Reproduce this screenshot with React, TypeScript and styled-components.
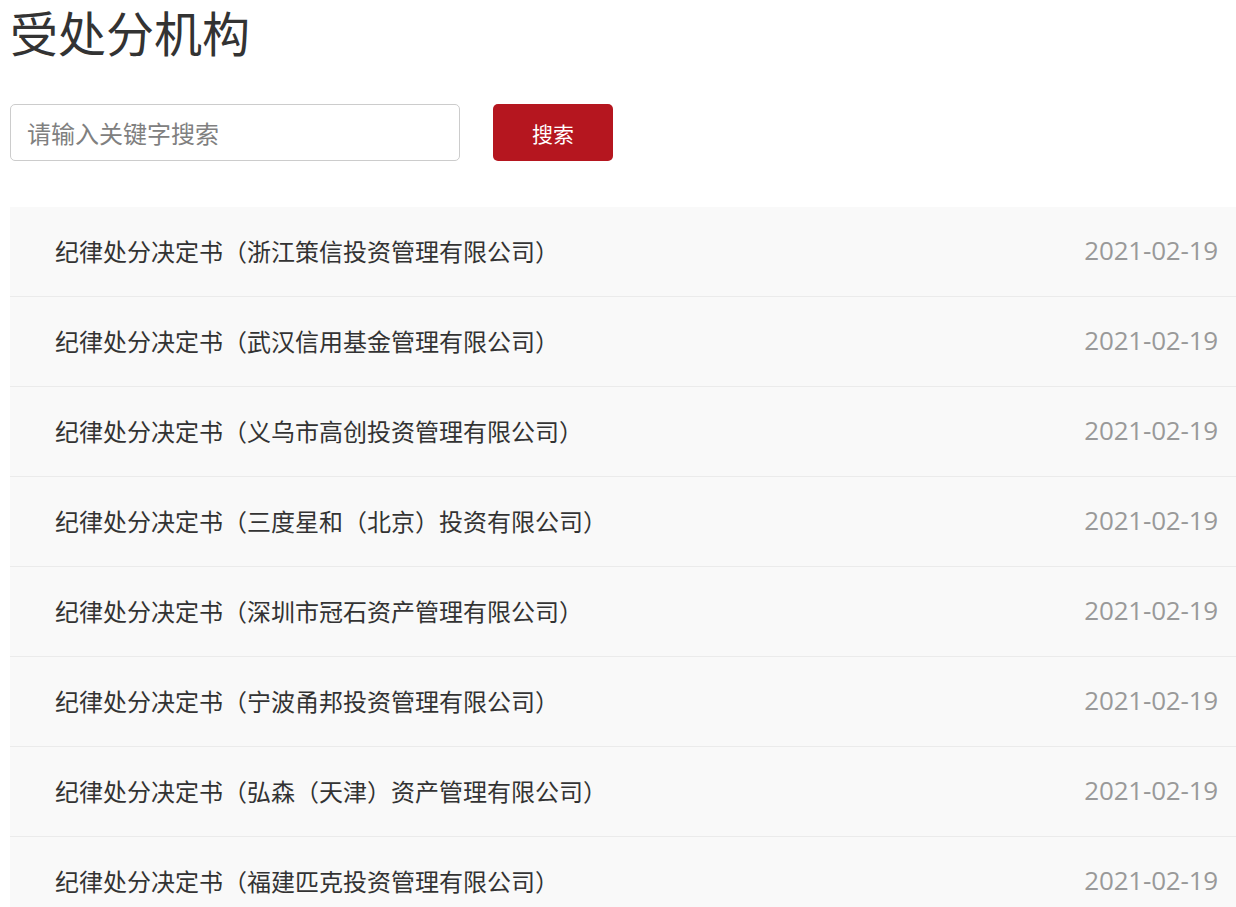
import * as React from 'react';
import styled, { createGlobalStyle } from 'styled-components';

const GlobalStyle = createGlobalStyle`
    html, body {
        margin: 0;
        padding: 0;
        background: #fff;
    }
    body {
        font-family: "Noto Sans CJK SC", "Open Sans", sans-serif;
        color: #333;
        overflow: hidden;
    }
`;

const Page = styled.div`
    padding: 0 0 0 10px;
`;

const Title = styled.h1`
    margin: 0;
    font-size: 48px;
    font-weight: 400;
    line-height: 62px;
    color: #333;
`;

const SearchBar = styled.form`
    display: flex;
    align-items: center;
    gap: 33px;
    margin-top: 42px;
`;

const SearchInput = styled.input`
    box-sizing: border-box;
    width: 450px;
    height: 57px;
    padding: 0 16px;
    border: 1px solid #ccc;
    border-radius: 5px;
    font-family: "Noto Sans CJK SC", sans-serif;
    font-size: 24px;
    color: #333;
    outline: none;

    &::placeholder {
        color: #808080;
    }
`;

const SearchButton = styled.button`
    width: 120px;
    height: 57px;
    border: none;
    border-radius: 5px;
    background: #b5161f;
    color: #fff;
    font-family: "Noto Sans CJK SC", sans-serif;
    font-size: 21px;
    cursor: pointer;
`;

const List = styled.ul`
    list-style: none;
    margin: 46px 0 0;
    padding: 0;
`;

const Item = styled.li`
    box-sizing: border-box;
    display: flex;
    align-items: center;
    justify-content: space-between;
    height: 90px;
    padding: 0 18px 3px 45px;
    background: #f9f9f9;
    border-bottom: 1px solid #ebebeb;
`;

const ItemTitle = styled.span`
    font-size: 24px;
    color: #333;
`;

const ItemDate = styled.span`
    font-family: "Open Sans", sans-serif;
    font-size: 26px;
    letter-spacing: -0.2px;
    color: #999;
`;

const records = [
    '纪律处分决定书（浙江策信投资管理有限公司）',
    '纪律处分决定书（武汉信用基金管理有限公司）',
    '纪律处分决定书（义乌市高创投资管理有限公司）',
    '纪律处分决定书（三度星和（北京）投资有限公司）',
    '纪律处分决定书（深圳市冠石资产管理有限公司）',
    '纪律处分决定书（宁波甬邦投资管理有限公司）',
    '纪律处分决定书（弘森（天津）资产管理有限公司）',
    '纪律处分决定书（福建匹克投资管理有限公司）',
];

export default function App() {
    return (
        <Page>
            <GlobalStyle />
            <Title>受处分机构</Title>
            <SearchBar onSubmit={(e) => e.preventDefault()}>
                <SearchInput placeholder="请输入关键字搜索" />
                <SearchButton type="submit">搜索</SearchButton>
            </SearchBar>
            <List>
                {records.map((title, i) => (
                    <Item key={i}>
                        <ItemTitle>{title}</ItemTitle>
                        <ItemDate>2021-02-19</ItemDate>
                    </Item>
                ))}
            </List>
        </Page>
    );
}
